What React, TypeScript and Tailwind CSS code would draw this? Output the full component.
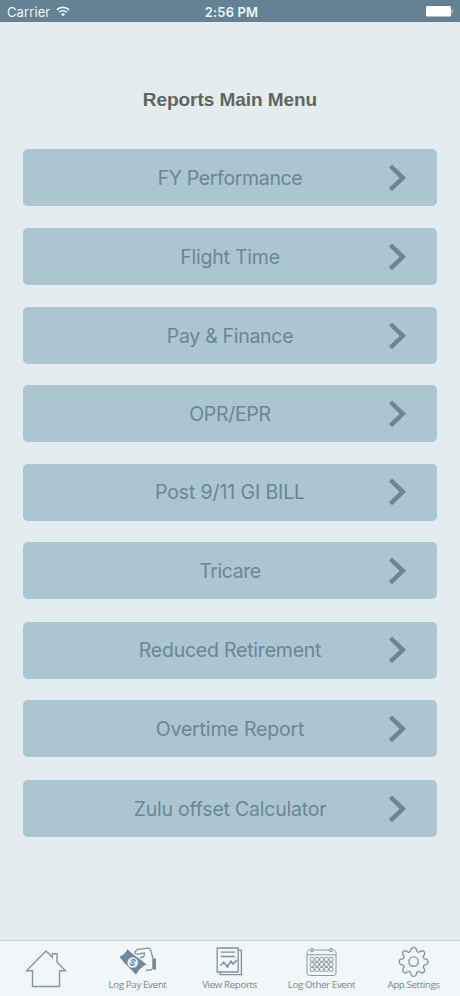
import type { ReactNode } from "react";

interface MenuItem {
  label: string;
  // space above the row
  className: string;
  tracking: string;
}

const items: MenuItem[] = [
  { label: "FY Performance", className: "", tracking: "tracking-[-0.35px]" },
  { label: "Flight Time", className: "mt-[22px]", tracking: "tracking-[-0.22px]" },
  { label: "Pay & Finance", className: "mt-[22px]", tracking: "tracking-[-0.3px]" },
  { label: "OPR/EPR", className: "mt-[21px]", tracking: "tracking-[-0.3px]" },
  { label: "Post 9/11 GI BILL", className: "mt-[21.5px]", tracking: "tracking-[-0.12px]" },
  { label: "Tricare", className: "mt-[21.5px]", tracking: "tracking-[-0.45px]" },
  { label: "Reduced Retirement", className: "mt-[22.5px]", tracking: "tracking-[-0.22px]" },
  { label: "Overtime Report", className: "mt-[21.5px]", tracking: "tracking-[-0.15px]" },
  { label: "Zulu offset Calculator", className: "mt-[23px]", tracking: "tracking-[-0.22px]" },
];

function StatusBar() {
  return (
    <header className="flex h-[22px] items-center bg-[#648293] px-[7px] text-[13px] text-[#edf6f9]">
      <div className="flex flex-1 items-center gap-[6px] pt-[3px]">
        <span className="tracking-[0.1px]">Carrier</span>
        <svg className="-mt-[3px]" width="14" height="11" viewBox="0 0 14 11" fill="none" stroke="currentColor">
          <path d="M.8 3.9a8.8 8.8 0 0 1 12.4 0" strokeWidth="1.7" />
          <path d="M3.1 6.3a5.5 5.5 0 0 1 7.8 0" strokeWidth="1.6" />
          <path d="M7 10.3 4.9 8.2a3 3 0 0 1 4.2 0Z" fill="currentColor" stroke="none" />
        </svg>
      </div>
      <span className="translate-x-[1.5px] pt-[3px] font-semibold tracking-[0.15px]">2:56 PM</span>
      <div className="flex flex-1 items-center justify-end">
        <svg width="28" height="12" viewBox="0 0 28 12" fill="#fff">
          <rect x="1" y="1" width="25" height="10.5" rx="1.5" />
          <path d="M26.8 4.3c1.3.7 1.3 3.1 0 3.8Z" />
        </svg>
      </div>
    </header>
  );
}

function MenuButton({ item }: { item: MenuItem }) {
  return (
    <button
      type="button"
      className={`grid h-[57px] w-full shrink-0 grid-cols-[1fr_auto_1fr] items-center rounded-[5px] bg-[#abc5d1] text-[#6b8795] ${item.className}`}
    >
      <span />
      <span className={`text-[19.5px] leading-[24px] whitespace-nowrap ${item.tracking}`}>{item.label}</span>
      <svg className="mr-[29px] justify-self-end" width="20" height="28" viewBox="0 0 20 28" fill="none" stroke="#6b8795" strokeWidth="4.5">
        <path d="M2.5 2 14.8 13.8 2.5 25.6" />
      </svg>
    </button>
  );
}

function HomeIcon() {
  return (
    <svg width="92" height="55" viewBox="0 0 92 55" fill="none" stroke="#87969e" strokeWidth="1.4">
      <path d="M46 10 26.5 29.8h6v15.7h27V29.8h6L57 21v-8.2h-4.7v3.4Z" />
    </svg>
  );
}

function PayIcon() {
  return (
    <svg width="92" height="37" viewBox="0 0 92 37" fill="none">
      <path d="M27.5 15.5c3.500-.8 6-3.500 8-7.200 6 6 12.500 9.700 19 15.200-4 1.500-8 5.500-10.500 10.300C38.500 27.500 32.500 23 27.500 15.500Z" fill="#71889a" />
      <circle cx="40.7" cy="21.5" r="5.3" fill="#f0f5f7" />
      <text x="40.7" y="24.9" textAnchor="middle" fontSize="9.5" fontWeight="600" fill="#71889a" transform="rotate(25 40.7 21.5)">$</text>
      <path d="M42.500 11.500 45.500 8.300 56.500 7.200c1 0 1.600.5 2 1.500l2.500 8.500" stroke="#81929d" strokeWidth="1.3" />
      <path d="M42.500 11.500c1 1.700 2.500 2 4.500 1.300l5.500-.8c.5 1.800-.2 3.200-1.500 4.300l-3 .2M60 28.300c-1.800.8-3.500 1-6 .7" stroke="#81929d" strokeWidth="1.3" />
      <path d="M60.300 17.500H64v11h-3.700z" fill="#71889a" />
    </svg>
  );
}

function ReportsIcon() {
  return (
    <svg width="92" height="37" viewBox="0 0 92 37" fill="none" stroke="#7f9299" strokeWidth="1.3">
      <path d="M33.2 7h21v24h-21zM54.500 9.200h2.900v24.500H36.200V31" />
      <path d="M36.700 11.200h14.300M36.700 15.500h14.300" />
      <path d="m36.200 24.500 3.500-3 3.800 4 3.500-5 2.200 2.500 3.500-4" strokeWidth="1.5" />
      <g fill="#7f9299" stroke="none">
        <circle cx="39.7" cy="21.7" r="1.3" />
        <circle cx="43.5" cy="25.2" r="1.4" />
        <circle cx="47" cy="20.7" r="1.3" />
      </g>
    </svg>
  );
}

function CalendarIcon() {
  return (
    <svg width="92" height="37" viewBox="0 0 92 37" fill="none" stroke="#879aa3" strokeWidth="1">
      <path d="M35 9h-1.500c-1.500 0-2.500 1-2.500 2.500V32c0 1.500 1 2.500 2.500 2.500h24c1.500 0 2.500-1 2.500-2.500V11.500C60 10 59 9 57.500 9H56M37 9h17M31 13.800h29" />
      <path d="M35 7.500h2v3h-2zM54 7.500h2v3h-2z" />
      {[16.5, 21.5, 26.5].map((y) =>
        [34.3, 39, 43.7, 48.4, 53.1].map((x) => (
          <rect key={`${x}-${y}`} x={x} y={y} width="3.8" height="3.8" rx="0.9" />
        ))
      )}
    </svg>
  );
}

function GearIcon() {
  return (
    <svg width="92" height="37" viewBox="0 0 92 37" fill="none">
      <g transform="translate(31.5 6.200) scale(1.180)" stroke="#8797a0" strokeWidth="1.2" strokeLinejoin="round">
        <path d="M9.900 1.300C10.200.5 10.800.2 12 .2s1.800.3 2.100 1.100l.5 1.800c.4 1 1.500 1.400 2.400.9l1.600-.9c.8-.4 1.300-.2 2.100.6s1 1.300.6 2.100l-.9 1.600c-.5.900-.1 2 .9 2.400l1.800.5c.8.3 1.100.9 1.100 2.100s-.3 1.800-1.100 2.100l-1.800.5c-1 .4-1.400 1.500-.9 2.400l.9 1.600c.4.800.2 1.300-.6 2.100s-1.300 1-2.100.6l-1.600-.9c-.9-.5-2-.1-2.400.9l-.5 1.800c-.3.8-.9 1.100-2.100 1.100s-1.800-.3-2.100-1.100l-.5-1.800c-.4-1-1.500-1.400-2.400-.9l-1.600.9c-.8.4-1.300.2-2.100-.6s-1-1.300-.6-2.100l.9-1.600c.5-.9.1-2-.9-2.400l-1.800-.5C.1 14.200-.2 13.600-.2 12.400s.3-1.800 1.100-2.100l1.800-.5c1-.4 1.400-1.500.9-2.400l-.9-1.600c-.4-.8-.2-1.300.6-2.100s1.300-1 2.100-.6l1.600.9c.9.5 2 .1 2.400-.9Z" />
        <circle cx="12" cy="12.2" r="4" />
      </g>
    </svg>
  );
}

function Tab({ icon, label }: { icon: ReactNode; label?: string }) {
  return (
    <button type="button" className="flex flex-col items-center">
      {icon}
      {label && (
        <span className="-translate-x-[0.5px] font-['Open_Sans','Noto_Sans',sans-serif] text-[9.75px] leading-[14px] tracking-[-0.38px] whitespace-nowrap text-[#76888f]">
          {label}
        </span>
      )}
    </button>
  );
}

export default function App() {
  return (
    <div className="flex h-[996px] w-[460px] flex-col overflow-hidden bg-[#e3ecee] font-[Inter,'Liberation_Sans',sans-serif]">
      <StatusBar />
      <main className="flex flex-1 flex-col px-[23px] pt-[66px]">
        <h1 className="mb-[37px] text-center font-['Liberation_Sans',Arial,sans-serif] text-[19px] leading-[24px] font-bold tracking-[-0.05px] text-[#60665f]">
          Reports Main Menu
        </h1>
        {items.map((item) => (
          <MenuButton key={item.label} item={item} />
        ))}
      </main>
      <nav className="grid h-[56px] grid-cols-5 items-start border-t border-[#cbd5d9] bg-[#f1f6f8]">
        <Tab icon={<HomeIcon />} />
        <Tab icon={<PayIcon />} label="Log Pay Event" />
        <Tab icon={<ReportsIcon />} label="View Reports" />
        <Tab icon={<CalendarIcon />} label="Log Other Event" />
        <Tab icon={<GearIcon />} label="App Settings" />
      </nav>
    </div>
  );
}
